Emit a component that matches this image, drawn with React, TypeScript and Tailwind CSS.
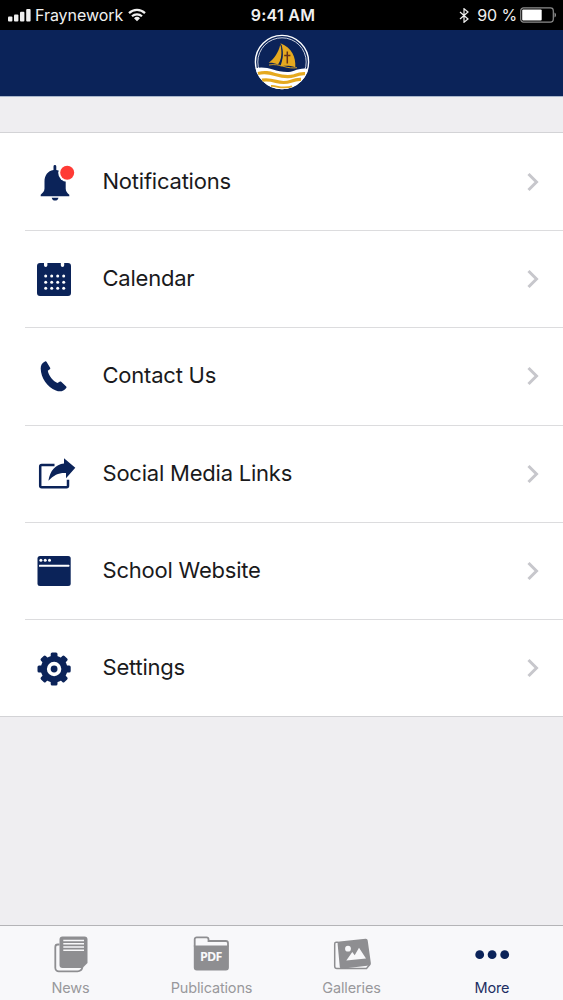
import type { ReactNode } from "react";
import { clsx } from "clsx";

interface MenuItem {
  label: string;
  icon: ReactNode;
}

interface TabItem {
  label: string;
  icon: ReactNode;
  width: string;
  active?: boolean;
}

const gearTeeth = [0, 45, 90, 135, 180, 225, 270, 315];
const calendarCols = [13.7, 19.7, 25.7, 31.7];
const calendarRows = [19, 25.2, 31.3];

function BellIcon() {
  return (
    <svg className="size-11 text-[#0b2359]" viewBox="0 0 44 44" fill="currentColor">
      <path d="M21.5 6.500a1.400 1.400 0 0 1 2.800 0v3.400c6 1 9.400 5.400 9.400 11.600v7c0 3 1.600 4.400 3.600 6.200v1.500H8.700v-1.500c2-1.800 3.800-3.400 3.800-6.200v-7c0-6.200 3.200-10.600 9-11.600z" />
      <path d="M19.700 37.800h6.800c-.5 2-1.700 2.800-3.400 2.800s-2.900-.8-3.400-2.800z" />
      <circle cx="35.200" cy="12.800" r="9" fill="#fff" />
      <circle cx="35.200" cy="12.800" r="7" fill="#ff3b35" />
    </svg>
  );
}

function CalendarIcon() {
  return (
    <svg className="size-11 text-[#0b2359]" viewBox="0 0 44 44" fill="currentColor">
      <path d="M8 6h4v2.300a1.700 1.700 0 0 0 3.400 0V6h13.400v2.300a1.700 1.700 0 0 0 3.400 0V6H36a3 3 0 0 1 3 3v27a3 3 0 0 1-3 3H8a3 3 0 0 1-3-3V9a3 3 0 0 1 3-3z" />
      {calendarRows.map((y) =>
        calendarCols.map((x) => <circle key={`${x}-${y}`} cx={x} cy={y} r="1.500" fill="#fff" />)
      )}
    </svg>
  );
}

function PhoneIcon() {
  return (
    <svg className="size-11 text-[#0b2359]" viewBox="0 0 44 44" fill="currentColor">
      <path d="M13 7.400c.6-.3 1.100-.2 1.500.4l3.600 6c.4.600.2 1.200-.3 1.500l-2 1.500c1 5 5 10.300 9.600 12.200l2.200-1.300c.6-.4 1.100-.3 1.600.1l5 4.700c.5.500.5 1 0 1.500-2.500 3.200-6 4.300-10.300 2.500C15.200 32.800 8.900 23.800 8.700 14.400c0-3.300 1.300-5.700 4.300-7z" />
    </svg>
  );
}

function ShareIcon() {
  return (
    <svg className="size-11 text-[#0b2359]" viewBox="0 0 44 44" fill="currentColor">
      <path
        d="M22.500 13H9.700a1.500 1.500 0 0 0-1.500 1.500v19.200a1.500 1.500 0 0 0 1.500 1.500H34.500a1.500 1.500 0 0 0 1.500-1.500v-6"
        fill="none"
        stroke="currentColor"
        strokeWidth="2.500"
      />
      <path d="M32 6.300l11.300 9.500L34 26.300v-5.300c-7-.4-12 1.700-17.600 7.800C18 18.500 23.500 12.500 32 11.500z" />
    </svg>
  );
}

function BrowserIcon() {
  return (
    <svg className="size-11 text-[#0b2359]" viewBox="0 0 44 44" fill="currentColor">
      <rect x="5.500" y="7" width="33.200" height="30" rx="2.500" />
      <circle cx="8.900" cy="11.300" r="1.500" fill="#fff" />
      <circle cx="13.200" cy="11.300" r="1.500" fill="#fff" />
      <circle cx="17.500" cy="11.300" r="1.500" fill="#fff" />
      <rect x="7" y="15.800" width="30.300" height="2" rx="0.500" fill="#fff" />
    </svg>
  );
}

function GearIcon() {
  return (
    <svg className="size-11 text-[#0b2359]" viewBox="0 0 44 44" fill="currentColor">
      {gearTeeth.map((angle) => (
        <rect key={angle} x="18.700" y="6.400" width="6.800" height="9" rx="1.500" transform={`rotate(${angle} 22.100 23)`} />
      ))}
      <circle cx="22.100" cy="23" r="13.300" />
      <circle cx="22.100" cy="23" r="7.200" fill="#fff" />
      <circle cx="22.100" cy="23" r="3.400" />
    </svg>
  );
}

function NewsIcon() {
  return (
    <svg className="h-10 w-12" viewBox="0 0 48 40">
      <path d="M12.500 10.500h-1.700A2.500 2.500 0 0 0 8.300 13v20.800a3.500 3.500 0 0 0 3.500 3.500H30.500c2.500 0 4.300-1.500 5-4" fill="none" stroke="#8e8e91" strokeWidth="1.800" />
      <path d="M15.500 2.500h22a3 3 0 0 1 3 3v23.500l-5 5h-20a3 3 0 0 1-3-3V5.500a3 3 0 0 1 3-3z" fill="#8e8e91" />
      <path d="M16.300 6.500h20.700M16.300 9.700h20.700M16.300 13h20.700M16.300 16.300h20.700" stroke="#f8f8fa" strokeWidth="1.400" />
    </svg>
  );
}

function PdfIcon() {
  return (
    <svg className="h-10 w-12" viewBox="0 0 48 40">
      <path d="M6.700 12.500V5.300a2 2 0 0 1 2-2h9.800a2 2 0 0 1 2 2v1.700h17.300A2.200 2.200 0 0 1 40 9.200v3.300" fill="none" stroke="#8e8e91" strokeWidth="1.800" />
      <path d="M5.800 11.500h35.100v22a3 3 0 0 1-3 3H8.800a3 3 0 0 1-3-3z" fill="#8e8e91" />
      <text x="11.900" y="27" textLength="22.500" fontSize="12.500" fontWeight="700" fill="#f8f8fa" fontFamily="Open Sans, sans-serif">
        PDF
      </text>
    </svg>
  );
}

function GalleryIcon() {
  return (
    <svg className="h-10 w-12" viewBox="0 0 48 40">
      <path d="M10.500 8.300H8.200a1.500 1.500 0 0 0-1.500 1.500v22.500a2.300 2.300 0 0 0 2.300 2.300h29.500l3.300-4" fill="none" stroke="#8e8e91" strokeWidth="1.500" />
      <path d="M11.500 7.500L37.500 4.800a2 2 0 0 1 2.200 1.800L42.900 29.200a2 2 0 0 1-1.700 2.300L14 34.700a2 2 0 0 1-2.200-1.700L9.600 9.800a2 2 0 0 1 1.900-2.300z" fill="#8e8e91" />
      <circle cx="20" cy="14.700" r="2.900" fill="#f8f8fa" />
      <path d="M18.300 26.500l6-8.400 2.400 3.200 4.300-7.500 7 10.700z" fill="#f8f8fa" />
    </svg>
  );
}

function MoreIcon() {
  return (
    <svg className="h-10 w-12" viewBox="0 0 48 40" fill="#0b2359">
      <circle cx="11.700" cy="20.700" r="4.400" />
      <circle cx="24.100" cy="20.700" r="4.400" />
      <circle cx="36.700" cy="20.700" r="4.400" />
    </svg>
  );
}

function SchoolLogo() {
  return (
    <svg className="size-14" viewBox="0 0 56 56">
      <defs>
        <clipPath id="logo-sea">
          <circle cx="28" cy="28" r="27.300" />
        </clipPath>
      </defs>
      <circle cx="28" cy="28" r="26.600" fill="#0b2359" stroke="#fff" strokeWidth="1.400" />
      <circle cx="28" cy="28" r="24.200" fill="none" stroke="#dfe3ec" strokeWidth="0.900" />
      <g clipPath="url(#logo-sea)">
        <path d="M0 34.500c7-2 13-.8 19 1s15 4 21 1.300c5-2 9-3 16-1.800V56H0z" fill="#fff" />
        <g fill="none" stroke="#e5a91f" strokeWidth="3.200">
          <path d="M4 39.500c7-1.800 11-.8 17 1s13 3.300 19 1.300c4-1.500 7-2.500 11-2.200" />
          <path d="M8 46.200c6-1 9-.2 14 1.200s10 1.600 15-.2c3-1.100 6-2 10-1.800" />
          <path d="M17 52c4-.3 6 1 10 1.300s8 .2 11-.9" strokeWidth="1.800" />
        </g>
      </g>
      <path d="M26.500 9.300C38 14 42 23.500 41.300 33.200c-5.500-2-12-1.800-15-.8C29.500 25 29.500 17 26.500 9.300z" fill="#e5a91f" />
      <path d="M26.300 10.500c2.300 7 1.500 15-2.300 20-3.500-1.500-6.500-2-9.300-1.700C20 25 24.500 18.500 26.300 10.500z" fill="#e5a91f" />
      <path d="M27 10.500c2.200 7.500 1.500 15.500-2.300 21" fill="none" stroke="#0b2359" strokeWidth="0.900" />
      <path d="M15 31c6-1 10 0 15 1.500 4 1.300 9 1.800 13 1.200" fill="none" stroke="#e5a91f" strokeWidth="0.900" />
      <path d="M33.300 17.500v12M30.200 21.500h6.200" stroke="#63311a" strokeWidth="1.500" />
    </svg>
  );
}

const menuItems: MenuItem[] = [
  { label: "Notifications",      icon: <BellIcon />     },
  { label: "Calendar",           icon: <CalendarIcon /> },
  { label: "Contact Us",         icon: <PhoneIcon />    },
  { label: "Social Media Links", icon: <ShareIcon />    },
  { label: "School Website",     icon: <BrowserIcon />  },
  { label: "Settings",           icon: <GearIcon />     },
];

const tabs: TabItem[] = [
  { label: "News",         icon: <NewsIcon />,    width: "w-[141px]" },
  { label: "Publications", icon: <PdfIcon />,     width: "w-[141px]" },
  { label: "Galleries",    icon: <GalleryIcon />, width: "w-[139px]" },
  { label: "More",         icon: <MoreIcon />,    width: "w-[142px]", active: true },
];

function StatusBar() {
  return (
    <div className="grid h-[30px] grid-cols-[1fr_auto_1fr] items-center bg-black pr-1.5 pl-2 text-[#f0f0f0]">
      <div className="flex items-center">
        <svg className="h-4 w-[23px]" viewBox="0 0 23 16" fill="currentColor">
          <rect x="0" y="9.500" width="4.400" height="5" rx="1" />
          <rect x="6" y="7.500" width="4.400" height="7" rx="1" />
          <rect x="12" y="4.800" width="4.400" height="9.700" rx="1" />
          <rect x="18.200" y="2" width="4.400" height="12.500" rx="1" />
        </svg>
        <span className="ml-1 text-[16px] leading-none tracking-[-0.050px]">Fraynework</span>
        <svg className="ml-[5px] h-4 w-[18px]" viewBox="0 0 18 16" fill="none" stroke="currentColor" strokeWidth="2.200">
          <path d="M1 6.100a11.600 11.600 0 0 1 16 0" />
          <path d="M4 9.300a7.200 7.200 0 0 1 10 0" />
          <path d="M9 14.300l-3-3.100a4.300 4.300 0 0 1 6 0z" fill="currentColor" stroke="none" />
        </svg>
      </div>
      <span className="ml-px text-[16px] leading-none font-semibold tracking-[0.250px]">9:41 AM</span>
      <div className="flex items-center justify-end">
        <svg className="h-[15px] w-[10px]" viewBox="0 0 10 15" fill="none" stroke="currentColor" strokeWidth="1.200">
          <path d="M1 4l8 7-4 3.300V.7L9 4l-8 7" />
        </svg>
        <span className="ml-2 text-[16px] leading-none tracking-[-0.100px]">90 %</span>
        <svg className="ml-[3px] h-4 w-[37px]" viewBox="0 0 37 16">
          <rect x="0.700" y="0.900" width="32.600" height="14.200" rx="2.800" fill="none" stroke="#8d8d8d" strokeWidth="1.200" />
          <rect x="2.200" y="2.500" width="19.500" height="11" rx="1" fill="#fff" />
          <path d="M34.500 5.500c2 .8 2 4.200 0 5z" fill="#8d8d8d" />
        </svg>
      </div>
    </div>
  );
}

export default function App() {
  return (
    <div className="flex h-[1000px] w-[563px] flex-col overflow-hidden bg-[#efeff4] font-[Inter,sans-serif]">
      <StatusBar />

      {/* Header */}
      <header className="flex h-[67px] justify-center border-b border-[#a9b6cb] bg-[#0b2359] pt-1">
        <SchoolLogo />
      </header>

      {/* Menu */}
      <main className="flex-1 bg-[#efeef1] pt-[35px]">
        <ul className="border-y border-[#d3d3d6] bg-white">
          {menuItems.map((item, i) => (
            <li key={item.label} className="flex h-[97.200px] flex-col pl-[25px]">
              <div className="flex flex-1 items-center pt-px pr-6 pl-[7px]">
                {item.icon}
                <span className="mb-0.5 ml-[26.500px] text-[22px] leading-7 tracking-[-0.220px] text-[#1a1a1c]">
                  {item.label}
                </span>
                <svg className="ml-auto h-5 w-3" viewBox="0 0 12 20" fill="none" stroke="#c7c7cc" strokeWidth="3">
                  <path d="M1.500 2l8 8-8 8" />
                </svg>
              </div>
              {i < menuItems.length - 1 && <div className="-mb-px h-px bg-[#dcdcde]" />}
            </li>
          ))}
        </ul>
      </main>

      {/* Tab bar */}
      <nav className="flex h-[75px] border-t border-[#b4b4b7] bg-[#f8f8fa]">
        {tabs.map((tab) => (
          <div key={tab.label} className={clsx("flex flex-col items-center pt-2", tab.width)}>
            {tab.icon}
            <span
              className={clsx(
                "mt-1 text-[14.500px] leading-5 tracking-[-0.150px]",
                tab.active ? "text-[#1d2f63]" : "text-[#98989c]"
              )}
            >
              {tab.label}
            </span>
          </div>
        ))}
      </nav>
    </div>
  );
}
